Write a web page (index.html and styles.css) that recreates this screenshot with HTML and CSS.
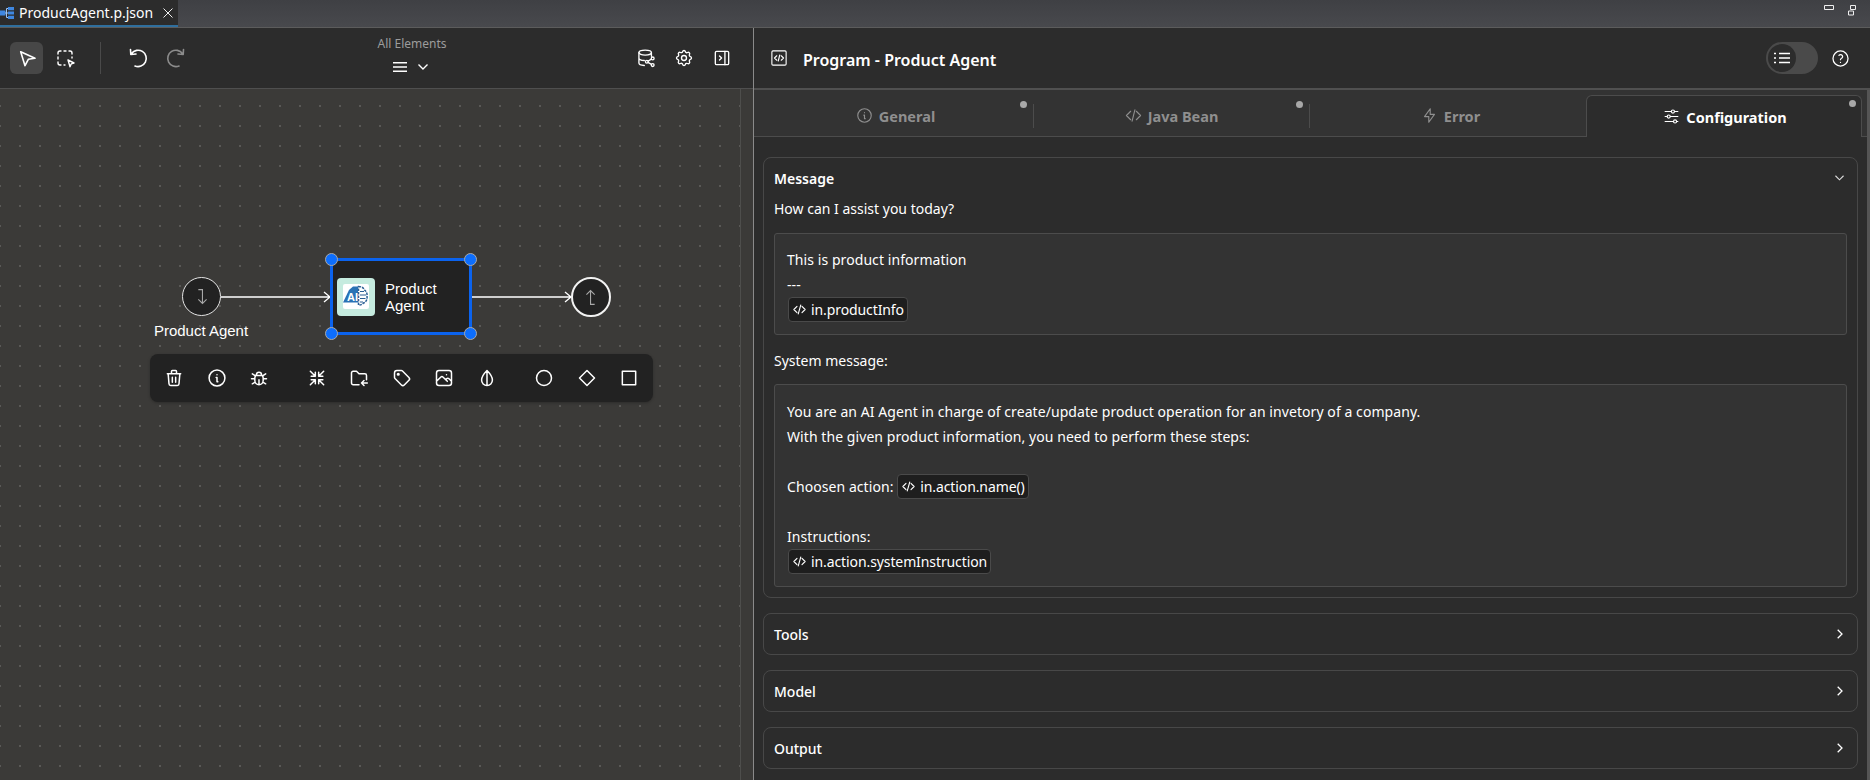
FILE: index.html
```html
<!DOCTYPE html>
<html lang="en">

<head>
    <meta charset="UTF-8">
    <title>ProductAgent.p.json</title>
    <link rel="stylesheet" href="styles.css">
</head>

<body>
    <svg class="sprites" width="0" height="0">
        <symbol id="i-code" viewBox="0 0 24 24"><path d="M8 7l-5 5 5 5M16 7l5 5-5 5M14 5l-4 14"/></symbol>
        <symbol id="i-info" viewBox="0 0 24 24"><circle cx="12" cy="12" r="9.5"/><path d="M12 8v.01M11 11.5h1v5h1"/></symbol>
    </svg>

    <div class="tabbar">
        <div class="file-tab">
            <svg class="file-icon" viewBox="0 0 14 12"><path d="M0 3.500h5.500v5H0zM8 0h6v3.200H8zM8 4.400h6v3.200H8zM8 8.800h6V12H8z" fill="#3f87e0"/><path d="M5 6h3M6.500 1.500v9M6.500 1.500H8M6.500 10.500H8" stroke="#9cc3f2" fill="none"/></svg>
            <span class="file-name">ProductAgent.p.json</span>
            <svg class="file-close" viewBox="0 0 10 10"><path d="M.5.5l9 9M9.500.5l-9 9"/></svg>
        </div>
        <div class="win-btns">
            <svg class="win-min" viewBox="0 0 10 6"><path d="M.5.5h9v4h-9z"/></svg>
            <svg class="win-max" viewBox="0 0 8 11"><path d="M2.500.5h5v4h-5zM.5 6h5v4h-5z"/></svg>
        </div>
    </div>

    <div class="main">
        <div class="editor">
            <div class="toolbar">
                <div class="tool-btn selected">
                    <svg class="ico" viewBox="0 0 24 24"><path d="M5.700 5.700L20 12.300l-6.700 1-3.300 6.400z"/></svg>
                </div>
                <div class="tool-btn">
                    <svg class="ico thin" viewBox="0 0 24 24"><path d="M5 8V7a2 2 0 0 1 2-2h1M11 5h2M16 5h1a2 2 0 0 1 2 2v1M19 11v1M5 11v2M5 16v1a2 2 0 0 0 2 2h1M11 19h1"/><path d="M15 14l6 3-2.700.8-1.300 3z"/></svg>
                </div>
                <div class="tool-sep"></div>
                <div class="tool-btn">
                    <svg class="ico" viewBox="0 0 24 24"><path d="M5.500 7.500A8.200 8.200 0 1 1 9 20M4.500 3.500L4.800 8.500 10 8"/></svg>
                </div>
                <div class="tool-btn dim">
                    <svg class="ico" viewBox="0 0 24 24"><path d="M18.500 7.500A8.200 8.200 0 1 0 15 20M19.500 3.500L19.200 8.500 14 8"/></svg>
                </div>
                <div class="filter">
                    <div class="filter-label">All Elements</div>
                    <div class="filter-btn">
                        <svg class="filter-menu" viewBox="0 0 14 10"><path d="M0 .75h14M0 5h14M0 9.250h14"/></svg>
                        <svg class="filter-chev" viewBox="0 0 10 6"><path d="M.5.5L5 5 9.500.5"/></svg>
                    </div>
                </div>
                <div class="tool-right">
                    <div class="tool-btn small">
                        <svg class="ico" viewBox="0 0 24 24"><ellipse cx="11" cy="5.500" rx="7.500" ry="3"/><path d="M3.500 5.500v12.500c0 1.700 3 2.800 6.500 3M3.500 12c0 1.700 3 3 6.500 3M18.500 5.500V10"/><circle cx="13" cy="16.500" r="1.700"/><circle cx="20" cy="12.500" r="1.700"/><circle cx="20" cy="20.500" r="1.700"/><path d="M14.500 15.700l4-2.300M14.500 17.300l4 2.400"/></svg>
                    </div>
                    <div class="tool-btn small">
                        <svg class="ico" viewBox="0 0 24 24"><path d="M10.325 4.317c.426-1.756 2.924-1.756 3.350 0a1.724 1.724 0 0 0 2.573 1.066c1.543-.94 3.310.826 2.370 2.370a1.724 1.724 0 0 0 1.065 2.572c1.756.426 1.756 2.924 0 3.350a1.724 1.724 0 0 0-1.066 2.573c.94 1.543-.826 3.310-2.370 2.370a1.724 1.724 0 0 0-2.572 1.065c-.426 1.756-2.924 1.756-3.350 0a1.724 1.724 0 0 0-2.573-1.066c-1.543.94-3.310-.826-2.370-2.370a1.724 1.724 0 0 0-1.065-2.572c-1.756-.426-1.756-2.924 0-3.350a1.724 1.724 0 0 0 1.066-2.573c-.94-1.543.826-3.310 2.370-2.370c1 .608 2.296.07 2.572-1.065z"/><circle cx="12" cy="12" r="3"/></svg>
                    </div>
                    <div class="tool-btn small">
                        <svg class="ico" viewBox="0 0 24 24"><rect x="4" y="4" width="16" height="16" rx="1.500"/><path d="M15.500 4v16M9 9.500l2.500 2.500L9 14.500"/></svg>
                    </div>
                </div>
            </div>

            <div class="canvas">
                <div class="canvas-rule"></div>
                <svg class="edges" width="740" height="691">
                    <path d="M221 208H330M324 203l6 5-6 5"/>
                    <path d="M472 208H571M565 203l6 5-6 5"/>
                </svg>

                <div class="event start">
                    <svg viewBox="0 0 24 24"><path d="M8 4h4.500v15M8 14.500l4.500 4.500 4.500-4.500"/></svg>
                </div>
                <div class="event-label">Product Agent</div>

                <div class="node">
                    <div class="node-logo">
                        <svg viewBox="0 0 26 26">
                            <rect width="26" height="25" rx="2" fill="#fff"/>
                            <path d="M0 18.500L6 6l4-3.500h5V18.500z" fill="#2a72b5"/>
                            <path d="M15.500 2.500c3 0 5 1.300 6 3.500 2 1.500 3 4 2.500 6.500.5 3-1 5.500-3.500 6.500-1.500 1.500-3 2-5 2z" fill="none" stroke="#2a5f94" stroke-width="1.500" stroke-dasharray="2.500 1"/>
                            <path d="M17 7.500h4M17 11h6M17 14.500h5.500M17 18h3" stroke="#2a5f94" stroke-width="1.200"/>
                            <text class="logo-text" x="4" y="16.500">AI</text>
                        </svg>
                    </div>
                    <div class="node-name">Product<br>Agent</div>
                    <span class="handle tl"></span>
                    <span class="handle tr"></span>
                    <span class="handle bl"></span>
                    <span class="handle br"></span>
                </div>

                <div class="event end">
                    <svg viewBox="0 0 24 24"><path d="M16 20h-4.500V5M7 9.500l4.500-4.500 4.500 4.500"/></svg>
                </div>

                <div class="quick-menu">
                    <svg class="ico" viewBox="0 0 24 24"><path d="M4 7h16M10 11v6M14 11v6M5 7l1 12a2 2 0 0 0 2 2h8a2 2 0 0 0 2-2l1-12M9 7V4a1 1 0 0 1 1-1h4a1 1 0 0 1 1 1v3"/></svg>
                    <svg class="ico" viewBox="0 0 24 24"><use href="#i-info"/></svg>
                    <svg class="ico gap-after" viewBox="0 0 24 24"><path d="M9 9V8a3 3 0 0 1 6 0v1M8 9h8a6 6 0 0 1 1 3v3a5 5 0 0 1-10 0v-3a6 6 0 0 1 1-3M3 13h4M17 13h4M12 20v-6M4 19l3.350-2M20 19l-3.350-2M4 7l3.750 2.400M20 7l-3.750 2.400"/></svg>
                    <svg class="ico" viewBox="0 0 24 24"><path d="M4 4l6 6M10 5v5H5M20 4l-6 6M14 5v5h5M4 20l6-6M10 19v-5H5M20 20l-6-6M14 19v-5h5"/></svg>
                    <svg class="ico" viewBox="0 0 24 24"><path d="M12 20H5a2 2 0 0 1-2-2V6a2 2 0 0 1 2-2h4l3 3h7a2 2 0 0 1 2 2v5M22 18h-7M18 15l-3 3 3 3"/></svg>
                    <svg class="ico" viewBox="0 0 24 24"><path d="M7.500 6.500a1 1 0 1 0 0 2 1 1 0 1 0 0-2M3 6v5.172a2 2 0 0 0 .586 1.414l7.710 7.710a2.410 2.410 0 0 0 3.408 0l5.592-5.592a2.410 2.410 0 0 0 0-3.408l-7.710-7.710A2 2 0 0 0 11.172 3H6a3 3 0 0 0-3 3"/></svg>
                    <svg class="ico" viewBox="0 0 24 24"><path d="M15 8h.01M3 6a3 3 0 0 1 3-3h12a3 3 0 0 1 3 3v12a3 3 0 0 1-3 3H6a3 3 0 0 1-3-3zM3 16l5-5c.928-.893 2.072-.893 3 0l5 5M14 14l1-1c.928-.893 2.072-.893 3 0l3 3"/></svg>
                    <svg class="ico gap-after" viewBox="0 0 24 24"><path d="M12 3s-6.500 6.500-6.500 11.500a6.500 6.500 0 0 0 13 0C18.500 9.500 12 3 12 3zM12 3v18"/></svg>
                    <svg class="ico" viewBox="0 0 24 24"><circle cx="12" cy="12" r="9"/></svg>
                    <svg class="ico" viewBox="0 0 24 24"><path d="M12 3l9 9-9 9-9-9z"/></svg>
                    <svg class="ico" viewBox="0 0 24 24"><path d="M4 4h16v16H4z"/></svg>
                </div>
            </div>
        </div>

        <div class="panel">
            <div class="panel-head">
                <svg class="ico head-icon" viewBox="0 0 24 24"><rect x="2.500" y="2.500" width="19" height="19" rx="1.500"/><path d="M9 9l-3 3 3 3M15 9l3 3-3 3M13 8l-2 8"/></svg>
                <div class="panel-title">Program - Product Agent</div>
                <div class="toggle">
                    <div class="toggle-knob">
                        <svg viewBox="0 0 16 12"><path d="M5 1.500h11M5 6h11M5 10.500h11M0 1.500h2M0 6h2M0 10.500h2"/></svg>
                    </div>
                </div>
                <svg class="ico help" viewBox="0 0 24 24"><circle cx="12" cy="12" r="9.500"/><path d="M12 17v.01M12 13.500a1.500 1.500 0 0 1 1-1.500 2.600 2.600 0 1 0-3-4"/></svg>
            </div>

            <div class="tabs">
                <div class="tab">
                    <svg class="ico" viewBox="0 0 24 24"><use href="#i-info"/></svg>General<span class="dot"></span>
                </div>
                <div class="tab">
                    <svg class="ico" viewBox="0 0 24 24"><path d="M8 6l-6 6 6 6M16 6l6 6-6 6M14 4l-4 16"/></svg>Java Bean<span class="dot"></span>
                </div>
                <div class="tab">
                    <svg class="ico" viewBox="0 0 24 24"><path d="M13 2.500v8h6l-8 11v-8H5z"/></svg>Error
                </div>
                <div class="tab active">
                    <svg class="ico" viewBox="0 0 24 24"><circle cx="14" cy="5" r="2.200"/><path d="M3 5h9M16.500 5H21"/><circle cx="8" cy="12" r="2.200"/><path d="M3 12h3M10.500 12H21"/><circle cx="17" cy="19" r="2.200"/><path d="M3 19h12M19.500 19H21"/></svg>Configuration<span class="dot"></span>
                </div>
            </div>

            <div class="content">
                <div class="section open">
                    <div class="section-head">
                        <span class="section-title bold">Message</span>
                        <svg class="chev" viewBox="0 0 10 6"><path d="M.5.5L5 5 9.500.5"/></svg>
                    </div>
                    <div class="field-label first">How can I assist you today?</div>
                    <div class="textbox">
                        <div>This is product information</div>
                        <div>---</div>
                        <div><span class="chip"><svg class="ico" viewBox="0 0 24 24"><use href="#i-code"/></svg>in.productInfo</span></div>
                    </div>
                    <div class="field-label">System message:</div>
                    <div class="textbox system">
                        <div>You are an AI Agent in charge of create/update product operation for an invetory of a company.</div>
                        <div>With the given product information, you need to perform these steps:</div>
                        <div>&nbsp;</div>
                        <div>Choosen action: <span class="chip inline"><svg class="ico" viewBox="0 0 24 24"><use href="#i-code"/></svg>in.action.name()</span></div>
                        <div>&nbsp;</div>
                        <div>Instructions:</div>
                        <div><span class="chip"><svg class="ico" viewBox="0 0 24 24"><use href="#i-code"/></svg>in.action.systemInstruction</span></div>
                    </div>
                </div>
                <div class="section">
                    <div class="section-head"><span class="section-title">Tools</span><svg class="chev-r" viewBox="0 0 6 10"><path d="M.7.7L5 5 .7 9.300"/></svg></div>
                </div>
                <div class="section">
                    <div class="section-head"><span class="section-title">Model</span><svg class="chev-r" viewBox="0 0 6 10"><path d="M.7.7L5 5 .7 9.300"/></svg></div>
                </div>
                <div class="section">
                    <div class="section-head"><span class="section-title">Output</span><svg class="chev-r" viewBox="0 0 6 10"><path d="M.7.7L5 5 .7 9.300"/></svg></div>
                </div>
            </div>
            <div class="scrollbar"></div>
        </div>
    </div>
</body>

</html>
```

FILE: styles.css
```css
*{
    margin: 0;
    padding: 0;
    box-sizing: border-box;
}
html,body{
    height: 100%;
    overflow: hidden;
}
body{
    background: #2c2c2c;
    color: #fff;
    font-family: "Noto Sans", "Open Sans", sans-serif;
    font-size: 14px;
    display: flex;
    flex-direction: column;
}
.sprites{
    position: absolute;
}
.ico{
    fill: none;
    stroke: #fff;
    stroke-width: 1.6;
    stroke-linecap: round;
    stroke-linejoin: round;
    flex: none;
}
.ico.thin{
    stroke-width: 1.4;
}

/* top strip */
.tabbar{
    height: 28px;
    flex: none;
    display: flex;
    justify-content: space-between;
    background: linear-gradient(#3f4044, #48494d);
    border-bottom: 1px solid #5c5c5c;
}
.file-tab{
    width: 178px;
    height: 27px;
    background: #2c2c2c;
    border-bottom: 2px solid #2f6f9e;
    display: flex;
    align-items: center;
}
.file-icon{
    width: 14px;
    height: 12px;
    flex: none;
}
.file-name{
    margin-left: 5px;
    font-size: 14px;
    white-space: nowrap;
}
.file-close{
    width: 10px;
    height: 10px;
    margin-left: 10px;
    stroke: #eee;
    fill: none;
}
.win-btns{
    display: flex;
    align-items: flex-start;
    gap: 14px;
    padding: 5px 14px 0 0;
}
.win-min{
    width: 10px;
    height: 6px;
    fill: none;
    stroke: #eee;
}
.win-max{
    width: 8px;
    height: 11px;
    fill: none;
    stroke: #eee;
}

.main{
    flex: 1;
    display: flex;
    min-height: 0;
}

/* left side */
.editor{
    width: 754px;
    flex: none;
    display: flex;
    flex-direction: column;
    border-right: 1px solid #8a8a8a;
}
.toolbar{
    height: 61px;
    flex: none;
    display: flex;
    align-items: center;
    padding: 0 16px 0 10px;
    border-bottom: 1px solid #4f4f4f;
}
.tool-btn{
    width: 33px;
    height: 32px;
    border-radius: 6px;
    display: flex;
    align-items: center;
    justify-content: center;
    margin-right: 5px;
}
.tool-btn .ico{
    width: 24px;
    height: 24px;
}
.tool-btn.selected{
    background: #474747;
}
.tool-btn.dim .ico{
    stroke: #8c8c8c;
}
.tool-sep{
    width: 1px;
    height: 32px;
    background: #4a4a4a;
    margin: 0 20px 0 14px;
}
.filter{
    width: 80px;
    margin-left: 175px;
    align-self: flex-start;
    padding-top: 8px;
    text-align: center;
}
.filter-label{
    font-size: 12px;
    color: #9c9c9c;
    line-height: 16px;
    white-space: nowrap;
}
.filter-btn{
    display: flex;
    justify-content: center;
    align-items: center;
    gap: 11px;
    margin-top: 10px;
    padding-right: 3px;
}
.filter-menu{
    width: 14px;
    height: 10px;
    stroke: #fff;
    stroke-width: 1.4;
}
.filter-chev{
    width: 10px;
    height: 6px;
    fill: none;
    stroke: #fff;
    stroke-width: 1.4;
}
.tool-right{
    margin-left: auto;
    display: flex;
    gap: 8px;
}
.tool-btn.small{
    width: 30px;
    margin: 0;
}
.tool-btn.small .ico{
    width: 20px;
    height: 20px;
}

/* diagram */
.canvas{
    flex: 1;
    position: relative;
    background-color: #3b3a38;
    background-image: radial-gradient(circle at 1px 1px, #595856 1px, transparent 1.2px);
    background-size: 20px 20px;
    background-position: -1px 16px;
    overflow: hidden;
}
.canvas-rule{
    position: absolute;
    left: 740px;
    top: 0;
    bottom: 0;
    width: 14px;
    background: #3b3a38;
    border-left: 1px solid #4e4e4c;
}
.edges{
    position: absolute;
    left: 0;
    top: 0;
    fill: none;
    stroke: #fff;
    stroke-width: 1.3;
}
.event{
    position: absolute;
    border-radius: 50%;
    background: #222;
    display: flex;
    align-items: center;
    justify-content: center;
}
.event svg{
    width: 22px;
    height: 22px;
    fill: none;
    stroke: #a8a8a8;
    stroke-width: 1.2;
}
.event.start{
    left: 182px;
    top: 188px;
    width: 39px;
    height: 39px;
    border: 1.5px solid #e4e4e4;
}
.event.end{
    left: 571px;
    top: 188px;
    width: 40px;
    height: 40px;
    border: 2.5px solid #f2f2f2;
}
.event-label{
    position: absolute;
    left: 141px;
    width: 120px;
    top: 233px;
    text-align: center;
    font: 15px/17px "Liberation Sans", Arial, sans-serif;
}
.node{
    position: absolute;
    left: 330px;
    top: 169px;
    width: 142px;
    height: 77px;
    background: #222;
    border: 3px solid #0b63ee;
    display: flex;
    align-items: center;
    padding-left: 4px;
}
.node-logo{
    width: 38px;
    height: 38px;
    background: #c5ebdf;
    border-radius: 4px;
    display: flex;
    align-items: center;
    justify-content: center;
    flex: none;
}
.node-logo svg{
    width: 26px;
    height: 26px;
}
.logo-text{
    font: bold 11px "Liberation Sans", Arial, sans-serif;
    fill: #fff;
}
.node-name{
    margin-left: 10px;
    padding-top: 1px;
    font: 15px/17px "Liberation Sans", Arial, sans-serif;
}
.handle{
    position: absolute;
    width: 13px;
    height: 13px;
    border-radius: 50%;
    background: #0d6efd;
    border: 1px solid #a9a9a9;
}
.handle.tl{ left: -8px; top: -8px; }
.handle.tr{ right: -8px; top: -8px; }
.handle.bl{ left: -8px; bottom: -8px; }
.handle.br{ right: -8px; bottom: -8px; }
.quick-menu{
    position: absolute;
    left: 150px;
    top: 265px;
    width: 503px;
    height: 48px;
    background: #222;
    border-radius: 8px;
    box-shadow: 0 1px 3px rgba(0,0,0,0.25);
    display: flex;
    align-items: center;
    padding-left: 14px;
}
.quick-menu .ico{
    width: 20px;
    height: 20px;
    stroke-width: 1.8;
    margin-right: 22.5px;
}
.quick-menu .gap-after{
    margin-right: 37.5px;
}

/* right side */
.panel{
    flex: 1;
    position: relative;
    display: flex;
    flex-direction: column;
    min-width: 0;
}
.panel-head{
    height: 62px;
    flex: none;
    display: flex;
    align-items: center;
    padding: 0 20px 0 16px;
    border-bottom: 2px solid #505050;
}
.head-icon{
    width: 18px;
    height: 18px;
    stroke-width: 1.5;
}
.panel-title{
    margin-left: 15px;
    margin-top: 4px;
    font-size: 16px;
    font-weight: 600;
}
.toggle{
    margin-left: auto;
    width: 52px;
    height: 32px;
    border-radius: 16px;
    background: #4a4a4a;
    padding: 2px;
}
.toggle-knob{
    width: 28px;
    height: 28px;
    border-radius: 50%;
    background: #2c2c2c;
    display: flex;
    align-items: center;
    justify-content: center;
}
.toggle-knob svg{
    width: 16px;
    height: 12px;
    stroke: #fff;
    stroke-width: 1.4;
}
.help{
    width: 19px;
    height: 19px;
    margin-left: 13px;
}
.tabs{
    height: 47px;
    flex: none;
    display: flex;
    background: #333;
    padding: 5px 8px 0 4px;
    border-bottom: 1px solid #4c4c4c;
}
.tab{
    flex: 0 0 276px;
    position: relative;
    display: flex;
    align-items: center;
    justify-content: center;
    gap: 6px;
    padding-left: 5px;
    font-weight: 700;
    font-size: 14.5px;
    color: #8f8f8f;
}
.tab .ico{
    width: 17px;
    height: 17px;
    stroke: #8f8f8f;
    stroke-width: 1.6;
}
.tab:not(.active):not(:nth-child(3))::after{
    content: "";
    position: absolute;
    right: 0;
    top: 9px;
    height: 24px;
    width: 1px;
    background: #4c4c4c;
}
.tab.active{
    background: #2c2c2c;
    color: #fff;
    border: 1px solid #4c4c4c;
    border-bottom: 0;
    border-radius: 6px 6px 0 0;
    height: 42px;
    padding-left: 8px;
}
.tab.active .ico{
    stroke: #fff;
}
.dot{
    position: absolute;
    right: 5px;
    top: 4px;
    width: 7px;
    height: 7px;
    border-radius: 50%;
    background: #a8a8a8;
}
.tab:not(.active) .dot{
    right: 7px;
    top: 6px;
}
.content{
    flex: 1;
    padding: 20px 12px 0 9px;
    overflow: hidden;
}
.section{
    border: 1px solid #484848;
    border-radius: 8px;
    margin-bottom: 15px;
    height: 42px;
    padding: 0 10px;
}
.section.open{
    height: 441px;
}
.section-head{
    height: 40px;
    display: flex;
    align-items: center;
    justify-content: space-between;
}
.section-title{
    font-size: 14px;
    font-weight: 500;
}
.section-title.bold{
    font-weight: 600;
}
.chev{
    width: 9px;
    height: 6px;
    fill: none;
    stroke: #ddd;
    stroke-width: 1.2;
    margin-right: 3px;
}
.chev-r{
    width: 6px;
    height: 10px;
    fill: none;
    stroke: #fff;
    stroke-width: 1.3;
    margin-right: 4px;
}
.field-label{
    line-height: 25px;
    margin-top: 13px;
    margin-bottom: 11px;
}
.field-label.first{
    margin-top: -2px;
    margin-bottom: 12px;
}
.textbox{
    background: #333;
    border: 1px solid #4c4c4c;
    border-radius: 3px;
    padding: 13px 13px 12px 12px;
    line-height: 25px;
    letter-spacing: 0.07px;
}
.textbox.system{
    padding-top: 14px;
}
.chip{
    display: inline-flex;
    align-items: center;
    height: 25px;
    margin-left: 1px;
    vertical-align: top;
    background: #1e1e1e;
    border: 1px solid #4a4a4a;
    border-radius: 4px;
    padding: 0 3px;
    gap: 4px;
    letter-spacing: -0.1px;
}
.chip.inline{
    margin-left: 0;
}
.chip .ico{
    width: 15px;
    height: 15px;
    stroke-width: 1.8;
}
.scrollbar{
    position: absolute;
    right: 0;
    top: 62px;
    bottom: 0;
    width: 3px;
    background: #555;
}
```
